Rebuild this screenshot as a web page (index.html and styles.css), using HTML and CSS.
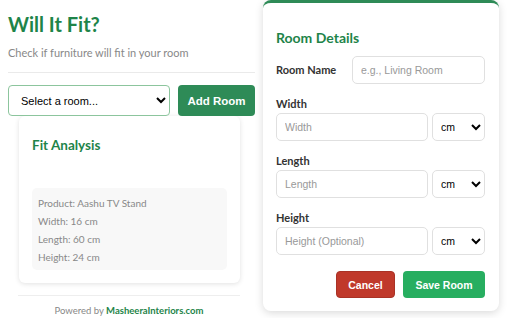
FILE: index.html
```html
<!DOCTYPE html>
<html>
<head>
<meta charset="utf-8">
<link rel="stylesheet" href="styles.css">
</head>
<body>
<div class="page">
  <main class="main">
    <h1 class="title">Will It Fit?</h1>
    <p class="subtitle">Check if furniture will fit in your room</p>
    <hr class="divider">
    <div class="room-row">
      <select class="room-select"><option>Select a room...</option></select>
      <button class="btn btn-add">Add Room</button>
    </div>
    <section class="card">
      <h2 class="card-title">Fit Analysis</h2>
      <div class="result"></div>
      <div class="product">
        <div>Product: Aashu TV Stand</div>
        <div>Width: 16 cm</div>
        <div>Length: 60 cm</div>
        <div>Height: 24 cm</div>
      </div>
    </section>
    <footer class="footer">Powered by <a class="brand">MasheeraInteriors.com</a></footer>
  </main>
  <aside class="modal">
    <h2 class="modal-title">Room Details</h2>
    <div class="name-row">
      <label class="label">Room Name</label>
      <input class="input name-input" placeholder="e.g., Living Room">
    </div>
    <div class="field">
      <label class="label">Width</label>
      <div class="dim-row">
        <input class="input dim-input" placeholder="Width">
        <select class="unit"><option>cm</option></select>
      </div>
    </div>
    <div class="field">
      <label class="label">Length</label>
      <div class="dim-row">
        <input class="input dim-input" placeholder="Length">
        <select class="unit"><option>cm</option></select>
      </div>
    </div>
    <div class="field">
      <label class="label">Height</label>
      <div class="dim-row">
        <input class="input dim-input" placeholder="Height (Optional)">
        <select class="unit"><option>cm</option></select>
      </div>
    </div>
    <div class="actions">
      <button class="btn btn-cancel">Cancel</button>
      <button class="btn btn-save">Save Room</button>
    </div>
  </aside>
</div>
</body>
</html>
```
FILE: styles.css
```css
* { box-sizing: border-box; }
html, body { margin: 0; padding: 0; background: #fff; }
body { font-family: Lato, "Noto Sans", sans-serif; color: #333; }
.page { display: flex; align-items: flex-start; gap: 8px; }
.main { width: 255px; padding: 0 0 0 8px; flex: none; }
.title { margin: 12px 0 0; font-size: 20px; line-height: 24px; font-weight: 700; color: #1e8449; }
.subtitle { margin: 9px 0 0; font-size: 11px; line-height: 16px; color: #888; }
.divider { margin: 11px 0 0; border: 0; border-top: 1px solid #eaeaea; }
.room-row { display: flex; gap: 8px; margin-top: 12px; position: relative; z-index: 1; }
.room-select { width: 162px; height: 31px; border: 1.5px solid #8cc59d; border-radius: 4px; font-family: "Liberation Sans", Arial, sans-serif; font-size: 11px; padding: 0 8px; background: #fff; color: #000; }
.btn { border: 0; border-radius: 4px; color: #fff; font-family: "Liberation Sans", Arial, sans-serif; font-weight: 700; font-size: 10.5px; cursor: pointer; white-space: nowrap; padding: 0; }
.btn-add { width: 77px; height: 31px; background: #2e8b57; font-size: 11.5px; }
.card { margin: 0 15px 0 11px; background: #fff; border-radius: 6px; box-shadow: 0 1px 5px rgba(0,0,0,0.12); padding: 19px 13px 13px; }
.card-title { margin: 0; font-size: 13.5px; line-height: 20px; color: #1e8449; font-weight: 700; }
.result { height: 33px; }
.product { background: #f8f8f8; border-radius: 5px; padding: 6px 6px 4px; font-size: 10px; line-height: 18px; color: #888; }
.footer { margin: 12px 15px 0 10px; border-top: 1px solid #eee; padding-top: 8px; text-align: center; font-size: 9.5px; line-height: 14px; color: #888; }
.brand { color: #1e8449; font-weight: 700; }
.modal { width: 236px; flex: none; background: #fff; border-top: 3px solid #2e8b57; border-radius: 8px; box-shadow: 0 2px 8px rgba(0,0,0,0.15); padding: 24px 14px 13px 13px; }
.modal-title { margin: 0 0 7px; font-size: 14px; line-height: 22px; color: #1e8449; font-weight: 700; }
.label { display: block; font-size: 11px; line-height: 16px; font-weight: 700; color: #333; }
.name-row { display: flex; align-items: center; gap: 8px; margin-bottom: 1px; }
.name-row .label { width: 68px; flex: none; }
.input { height: 28px; border: 1px solid #e0e0e0; border-radius: 5px; font-family: "Liberation Sans", Arial, sans-serif; font-size: 10.5px; padding: 0 8px; color: #333; background: #fff; }
.input::placeholder { color: #999; }
.name-input { flex: 1; min-width: 0; }
.field { margin-top: 12px; }
.field .label { margin-bottom: 1px; }
.dim-row { display: flex; gap: 4px; }
.dim-input { flex: 1; min-width: 0; }
.unit { width: 53px; height: 28px; border: 1px solid #e0e0e0; border-radius: 5px; font-family: "Liberation Sans", Arial, sans-serif; font-size: 10.5px; padding: 0 4px; background: #fff; color: #000; }
.actions { display: flex; justify-content: flex-end; gap: 8px; margin-top: 16px; }
.btn-cancel { width: 59px; height: 27px; background: #c0392b; border: 1px solid #a93226; }
.btn-save { width: 82px; height: 27px; background: #27ae60; }
```
